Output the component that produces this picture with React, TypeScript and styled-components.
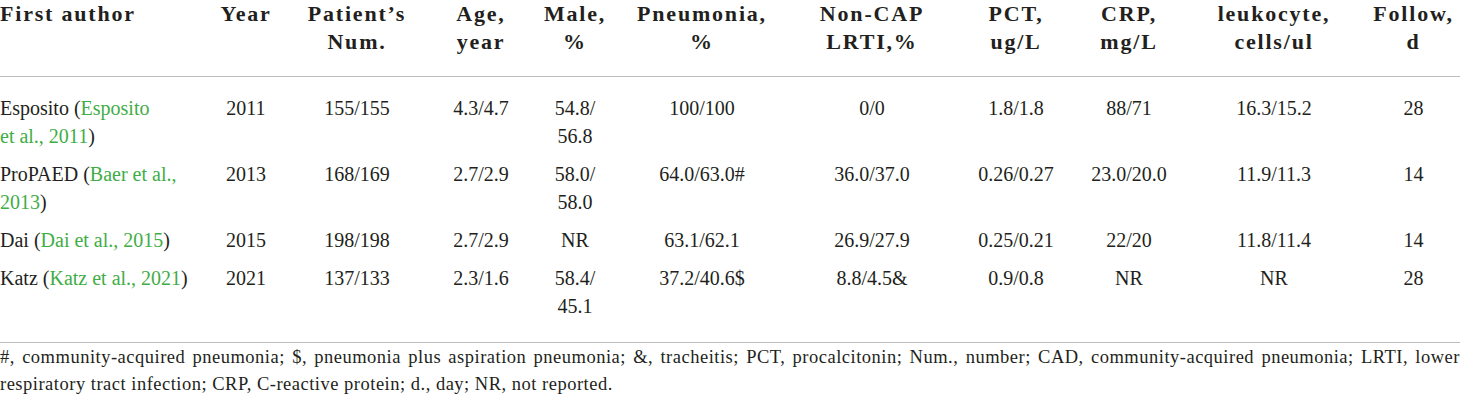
import React from 'react';
import styled, { createGlobalStyle } from 'styled-components';

const GlobalStyle = createGlobalStyle`
	html, body {
		margin: 0;
		padding: 0;
		background: #fff;
	}
	body {
		width: 1460px;
		overflow: hidden;
	}
`;

type Row = {
	author: string;
	cite: string;
	year: string;
	patients: string;
	age: string;
	male: string[];
	pneumonia: string;
	nonCap: string;
	pct: string;
	crp: string;
	leukocyte: string;
	follow: string;
};

const columns = [
	{ width: 205, lines: ['First author'], align: 'left' },
	{ width: 82, lines: ['Year'] },
	{ width: 140, lines: ['Patient\u2019s', 'Num.'] },
	{ width: 108, lines: ['Age,', 'year'] },
	{ width: 80, lines: ['Male,', '%'] },
	{ width: 174, lines: ['Pneumonia,', '%'] },
	{ width: 166, lines: ['Non-CAP', 'LRTI,%'] },
	{ width: 122, lines: ['PCT,', 'ug/L'] },
	{ width: 104, lines: ['CRP,', 'mg/L'] },
	{ width: 186, lines: ['leukocyte,', 'cells/ul'] },
	{ width: 93, lines: ['Follow,', 'd'] }
];

const rows: Row[] = [
	{
		author: 'Esposito',
		cite: 'Esposito et\u00a0al., 2011',
		year: '2011',
		patients: '155/155',
		age: '4.3/4.7',
		male: ['54.8/', '56.8'],
		pneumonia: '100/100',
		nonCap: '0/0',
		pct: '1.8/1.8',
		crp: '88/71',
		leukocyte: '16.3/15.2',
		follow: '28'
	},
	{
		author: 'ProPAED',
		cite: 'Baer et\u00a0al., 2013',
		year: '2013',
		patients: '168/169',
		age: '2.7/2.9',
		male: ['58.0/', '58.0'],
		pneumonia: '64.0/63.0#',
		nonCap: '36.0/37.0',
		pct: '0.26/0.27',
		crp: '23.0/20.0',
		leukocyte: '11.9/11.3',
		follow: '14'
	},
	{
		author: 'Dai',
		cite: 'Dai et\u00a0al., 2015',
		year: '2015',
		patients: '198/198',
		age: '2.7/2.9',
		male: ['NR'],
		pneumonia: '63.1/62.1',
		nonCap: '26.9/27.9',
		pct: '0.25/0.21',
		crp: '22/20',
		leukocyte: '11.8/11.4',
		follow: '14'
	},
	{
		author: 'Katz',
		cite: 'Katz et\u00a0al., 2021',
		year: '2021',
		patients: '137/133',
		age: '2.3/1.6',
		male: ['58.4/', '45.1'],
		pneumonia: '37.2/40.6$',
		nonCap: '8.8/4.5&',
		pct: '0.9/0.8',
		crp: 'NR',
		leukocyte: 'NR',
		follow: '28'
	}
];

const App = () => {
	return (
		<>
			<GlobalStyle />
			<Page>
				<Table>
					<colgroup>
						{columns.map((col, i) => (
							<col key={i} style={{ width: col.width }} />
						))}
					</colgroup>
					<thead>
						<tr>
							{columns.map((col, i) => (
								<Th key={i} $left={col.align === 'left'}>
									{col.lines.map((line, j) => (
										<React.Fragment key={j}>
											{j > 0 && <br />}
											{line}
										</React.Fragment>
									))}
								</Th>
							))}
						</tr>
					</thead>
					<tbody>
						{rows.map((row, i) => (
							<BodyRow key={i}>
								<AuthorCell>
									{row.author} (<Cite>{row.cite}</Cite>)
								</AuthorCell>
								<Td>{row.year}</Td>
								<Td>{row.patients}</Td>
								<Td>{row.age}</Td>
								<Td>
									{row.male.map((line, j) => (
										<React.Fragment key={j}>
											{j > 0 && <br />}
											{line}
										</React.Fragment>
									))}
								</Td>
								<Td>{row.pneumonia}</Td>
								<Td>{row.nonCap}</Td>
								<Td>{row.pct}</Td>
								<Td>{row.crp}</Td>
								<Td>{row.leukocyte}</Td>
								<Td>{row.follow}</Td>
							</BodyRow>
						))}
					</tbody>
				</Table>
				<Notes>
					<NoteLine $justify>
						#, community-acquired pneumonia; $, pneumonia plus aspiration pneumonia; &amp;, tracheitis; PCT, procalcitonin; Num., number; CAD, community-acquired pneumonia; LRTI, lower
					</NoteLine>
					<NoteLine>
						respiratory tract infection; CRP, C-reactive protein; d., day; NR, not reported.
					</NoteLine>
				</Notes>
			</Page>
		</>
	);
};

export default App;

const Page = styled.div`
	width: 1460px;
	color: #231f20;
`;

const Table = styled.table`
	width: 1460px;
	border-collapse: collapse;
	table-layout: fixed;
`;

const Th = styled.th<{ $left?: boolean }>`
	padding: 0 0 20px;
	font-family: 'Liberation Serif', 'Times New Roman', serif;
	font-size: 22px;
	font-weight: 700;
	letter-spacing: 1.8px;
	line-height: 28px;
	text-align: ${props => (props.$left ? 'left' : 'center')};
	vertical-align: top;
	white-space: nowrap;
	border-bottom: 1px solid #bdbdbd;
	color: #231f20;
`;

const BodyRow = styled.tr`
	&:first-child td {
		padding-top: 17px;
	}
	&:last-child td {
		padding-bottom: 22px;
	}
`;

const Td = styled.td`
	padding: 5px 0;
	font-family: 'Liberation Serif', 'Times New Roman', serif;
	font-size: 20px;
	line-height: 28px;
	text-align: center;
	vertical-align: top;
	color: #231f20;
`;

const AuthorCell = styled(Td)`
	text-align: left;
	padding-right: 12px;
`;

const Cite = styled.span`
	color: #3fad46;
`;

const Notes = styled.div`
	border-top: 1px solid #bdbdbd;
	padding-top: 1px;
	font-family: 'Liberation Serif', 'Times New Roman', serif;
	font-size: 18.5px;
	letter-spacing: 0.5px;
	line-height: 27px;
	color: #231f20;
`;

const NoteLine = styled.div<{ $justify?: boolean }>`
	text-align: ${props => (props.$justify ? 'justify' : 'left')};
	text-align-last: ${props => (props.$justify ? 'justify' : 'left')};
	white-space: nowrap;
`;
